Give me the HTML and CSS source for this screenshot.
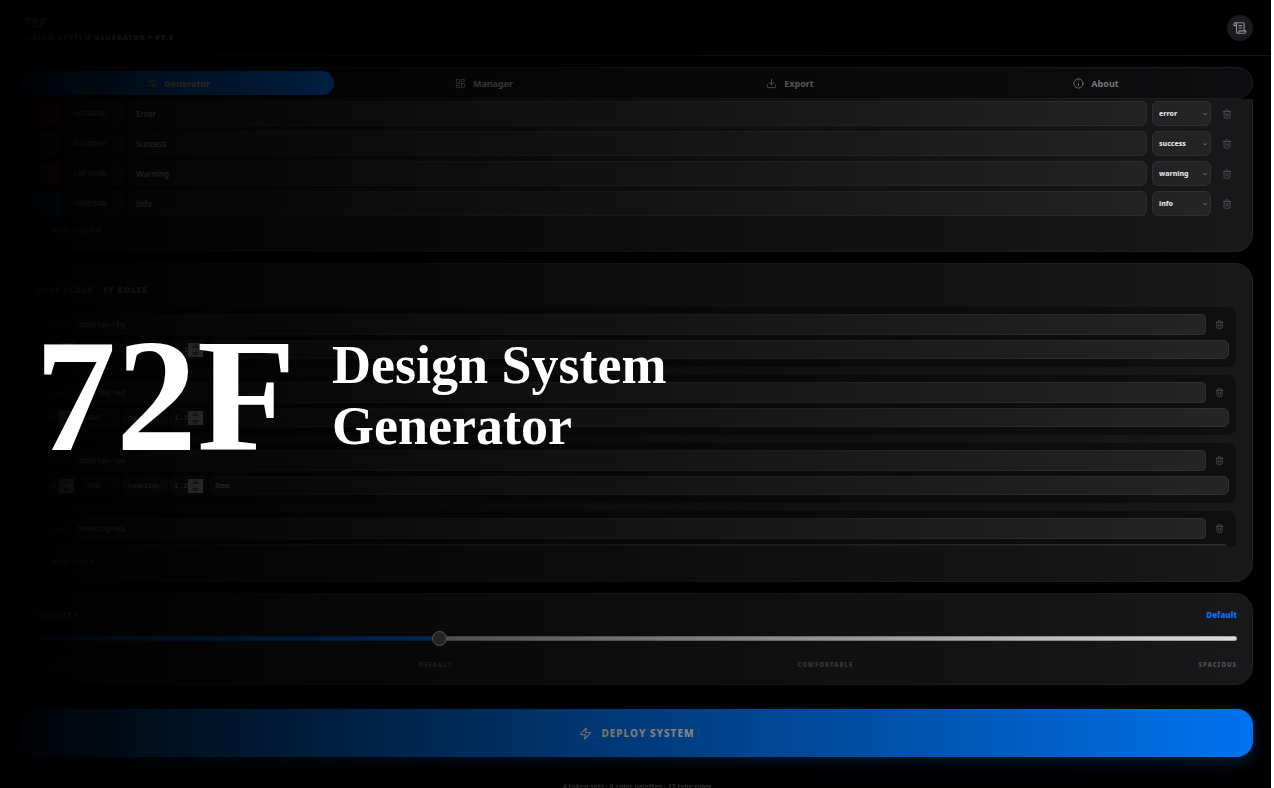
FILE: index.html
```
<!DOCTYPE html>
<html lang="en">
<head>
    <meta charset="UTF-8">
    <meta name="viewport" content="width=device-width, initial-scale=1.0">
    <title>72F Design System Generator</title>
    <link rel="stylesheet" href="styles.css">
</head>
<body>
    <svg width="0" height="0" class="sprite" aria-hidden="true">
        <symbol id="trash" viewBox="0 0 24 24">
            <path d="M3 6h18M19 6v14a2 2 0 0 1-2 2H7a2 2 0 0 1-2-2V6M8 6V4a2 2 0 0 1 2-2h4a2 2 0 0 1 2 2v2M10 11v6M14 11v6"/>
        </symbol>
        <symbol id="plus" viewBox="0 0 24 24"><path d="M5 12h14M12 5v14"/></symbol>
    </svg>

    <div class="app">
        <header class="header">
            <div>
                <h1 class="logo">72F</h1>
                <p class="tagline">Design System Generator • v1.0</p>
            </div>
            <button type="button" class="log-btn" aria-label="Changelog">
                <svg class="icon" viewBox="0 0 24 24"><path d="M15 12h-5M15 8h-5M19 17V5a2 2 0 0 0-2-2H4"/><path d="M8 21h12a2 2 0 0 0 2-2v-1a1 1 0 0 0-1-1H11a1 1 0 0 0-1 1v1a2 2 0 1 1-4 0V5a2 2 0 1 0-4 0v2a1 1 0 0 0 1 1h3"/></svg>
            </button>
        </header>

        <main class="main">
            <nav class="tabs">
                <button type="button" class="tab active">
                    <svg class="icon" viewBox="0 0 24 24"><path d="M20 7h-9M14 17H5"/><circle cx="17" cy="17" r="3"/><circle cx="7" cy="7" r="3"/></svg>
                    Generator
                </button>
                <button type="button" class="tab">
                    <svg class="icon" viewBox="0 0 24 24"><rect x="3" y="3" width="7" height="9" rx="1"/><rect x="14" y="3" width="7" height="5" rx="1"/><rect x="14" y="12" width="7" height="9" rx="1"/><rect x="3" y="16" width="7" height="5" rx="1"/></svg>
                    Manager
                </button>
                <button type="button" class="tab">
                    <svg class="icon" viewBox="0 0 24 24"><path d="M21 15v4a2 2 0 0 1-2 2H5a2 2 0 0 1-2-2v-4M7 10l5 5 5-5M12 15V3"/></svg>
                    Export
                </button>
                <button type="button" class="tab">
                    <svg class="icon" viewBox="0 0 24 24"><circle cx="12" cy="12" r="10"/><path d="M12 16v-4M12 8h.01"/></svg>
                    About
                </button>
            </nav>

            <section class="card colors">
                <div class="color-row">
                    <span class="swatch error"></span>
                    <input class="field hex" type="text" value="#B3261E" aria-label="Error hex">
                    <input class="field name" type="text" value="Error" aria-label="Error name">
                    <select class="field role" aria-label="Error role"><option>error</option></select>
                    <button type="button" class="delete" aria-label="Delete Error"><svg class="icon"><use href="#trash"/></svg></button>
                </div>
                <div class="color-row">
                    <span class="swatch success"></span>
                    <input class="field hex" type="text" value="#1D6D1F" aria-label="Success hex">
                    <input class="field name" type="text" value="Success" aria-label="Success name">
                    <select class="field role" aria-label="Success role"><option>success</option></select>
                    <button type="button" class="delete" aria-label="Delete Success"><svg class="icon"><use href="#trash"/></svg></button>
                </div>
                <div class="color-row">
                    <span class="swatch warning"></span>
                    <input class="field hex" type="text" value="#8F4E00" aria-label="Warning hex">
                    <input class="field name" type="text" value="Warning" aria-label="Warning name">
                    <select class="field role" aria-label="Warning role"><option>warning</option></select>
                    <button type="button" class="delete" aria-label="Delete Warning"><svg class="icon"><use href="#trash"/></svg></button>
                </div>
                <div class="color-row">
                    <span class="swatch info"></span>
                    <input class="field hex" type="text" value="#00639B" aria-label="Info hex">
                    <input class="field name" type="text" value="Info" aria-label="Info name">
                    <select class="field role" aria-label="Info role"><option>info</option></select>
                    <button type="button" class="delete" aria-label="Delete Info"><svg class="icon"><use href="#trash"/></svg></button>
                </div>
                <button type="button" class="add"><svg class="icon"><use href="#plus"/></svg>Add Color</button>
            </section>

            <section class="card types">
                <h2 class="card-title">Type Scale · 17 Roles</h2>
                <div class="type-list">
                    <div class="type-item">
                        <div class="type-row">
                            <span class="prefix">type/</span>
                            <input class="field path" type="text" value="display/lg" aria-label="Role name">
                            <button type="button" class="delete small" aria-label="Delete role"><svg class="icon"><use href="#trash"/></svg></button>
                        </div>
                        <div class="type-props">
                            <input class="field size" type="number" value="57" aria-label="Size">
                            <select class="field weight" aria-label="Weight"><option>400</option></select>
                            <select class="field family" aria-label="Family"><option>heading</option></select>
                            <input class="field leading" type="number" step="0.01" value="1.12" aria-label="Line height">
                            <input class="field tracking" type="text" value="0em" aria-label="Letter spacing">
                        </div>
                    </div>
                    <div class="type-item">
                        <div class="type-row">
                            <span class="prefix">type/</span>
                            <input class="field path" type="text" value="display/md" aria-label="Role name">
                            <button type="button" class="delete small" aria-label="Delete role"><svg class="icon"><use href="#trash"/></svg></button>
                        </div>
                        <div class="type-props">
                            <input class="field size" type="number" value="45" aria-label="Size">
                            <select class="field weight" aria-label="Weight"><option>400</option></select>
                            <select class="field family" aria-label="Family"><option>heading</option></select>
                            <input class="field leading" type="number" step="0.01" value="1.16" aria-label="Line height">
                            <input class="field tracking" type="text" value="0em" aria-label="Letter spacing">
                        </div>
                    </div>
                    <div class="type-item">
                        <div class="type-row">
                            <span class="prefix">type/</span>
                            <input class="field path" type="text" value="display/sm" aria-label="Role name">
                            <button type="button" class="delete small" aria-label="Delete role"><svg class="icon"><use href="#trash"/></svg></button>
                        </div>
                        <div class="type-props">
                            <input class="field size" type="number" value="36" aria-label="Size">
                            <select class="field weight" aria-label="Weight"><option>400</option></select>
                            <select class="field family" aria-label="Family"><option>heading</option></select>
                            <input class="field leading" type="number" step="0.01" value="1.22" aria-label="Line height">
                            <input class="field tracking" type="text" value="0em" aria-label="Letter spacing">
                        </div>
                    </div>
                    <div class="type-item">
                        <div class="type-row">
                            <span class="prefix">type/</span>
                            <input class="field path" type="text" value="heading/h1" aria-label="Role name">
                            <button type="button" class="delete small" aria-label="Delete role"><svg class="icon"><use href="#trash"/></svg></button>
                        </div>
                        <div class="type-props">
                            <input class="field size" type="number" value="32" aria-label="Size">
                            <select class="field weight" aria-label="Weight"><option>400</option></select>
                            <select class="field family" aria-label="Family"><option>heading</option></select>
                            <input class="field leading" type="number" step="0.01" value="1.25" aria-label="Line height">
                            <input class="field tracking" type="text" value="0em" aria-label="Letter spacing">
                        </div>
                    </div>
                </div>
                <button type="button" class="add"><svg class="icon"><use href="#plus"/></svg>Add Role</button>
            </section>

            <section class="card density">
                <div class="density-head">
                    <label class="card-title" for="density">Density</label>
                    <output class="density-value" for="density">Default</output>
                </div>
                <input class="slider" id="density" type="range" min="0" max="3" value="1">
                <div class="density-labels">
                    <span>Compact</span><span>Default</span><span>Comfortable</span><span>Spacious</span>
                </div>
            </section>

            <button type="button" class="deploy">
                <svg class="icon" viewBox="0 0 24 24"><path d="M4 14a1 1 0 0 1-.78-1.63l9.9-10.2a.5.5 0 0 1 .86.46l-1.92 6.02A1 1 0 0 0 13 10h7a1 1 0 0 1 .78 1.63l-9.9 10.2a.5.5 0 0 1-.86-.46l1.92-6.02A1 1 0 0 0 11 14z"/></svg>
                Deploy System
            </button>
            <p class="summary">4 token sets · 8 color palettes · 17 type roles</p>
        </main>

        <div class="cover">
            <div class="cover-logo">72F</div>
            <div class="cover-title">Design System<br>Generator</div>
        </div>
    </div>
</body>
</html>
```
FILE: styles.css
```
* {
    box-sizing: border-box;
}
body {
    margin: 0;
    background: #fff;
    font-family: "Noto Sans", sans-serif;
    overflow: hidden;
}
h1, h2, p {
    margin: 0;
}
button, input, select {
    font-family: inherit;
    margin: 0;
}
button {
    border: none;
    background: none;
    padding: 0;
    cursor: pointer;
}
.sprite {
    position: absolute;
}
.icon {
    fill: none;
    stroke: currentColor;
    stroke-width: 2;
    stroke-linecap: round;
    stroke-linejoin: round;
    flex: none;
}
.app {
    position: relative;
    height: 100vh;
    margin-right: 3px;
    background: #000;
    color: #fff;
    overflow: hidden;
}

/* header */
.header {
    display: flex;
    justify-content: space-between;
    align-items: center;
    height: 56px;
    padding: 0 18px 0 22px;
    border-bottom: 1px solid #161618;
}
.logo {
    font-size: 14px;
    line-height: 20px;
    font-weight: 900;
    font-style: italic;
}
.tagline {
    font-size: 7px;
    line-height: 10px;
    font-weight: 900;
    letter-spacing: 1px;
    text-transform: uppercase;
    color: #aeaeb2;
}
.log-btn {
    display: grid;
    place-items: center;
    width: 26px;
    height: 26px;
    border-radius: 50%;
    background: #1c1c1e;
    color: #98989d;
}
.log-btn .icon {
    width: 14px;
    height: 14px;
}

/* tabs */
.main {
    padding: 11px 18px 0 21px;
}
.tabs {
    display: flex;
    height: 32px;
    padding: 3px;
    border: 1px solid #202022;
    border-radius: 16px;
    background: #0e0e10;
}
.tab {
    flex: 1;
    display: flex;
    justify-content: center;
    align-items: center;
    gap: 7px;
    color: #8e8e93;
    font-size: 9px;
    font-weight: 700;
}
.tab .icon {
    width: 11px;
    height: 11px;
}
.tab.active {
    position: relative;
    isolation: isolate;
    color: #fff;
}
/* the pill runs a little past its tab */
.tab.active::before {
    content: "";
    position: absolute;
    inset: 0 -3px;
    z-index: -1;
    border-radius: 12px;
    background: #007aff;
}

/* cards */
.card {
    padding: 0 15px;
    border: 1px solid #242426;
    border-radius: 18px;
    background: #1a1a1c;
}
.card-title {
    font-size: 8px;
    line-height: 12px;
    font-weight: 900;
    letter-spacing: 1px;
    text-transform: uppercase;
    color: #aeaeb2;
}
.field {
    min-width: 0;
    padding: 0 6px;
    border: 1px solid #353537;
    border-radius: 6px;
    outline: none;
    background: #28282a;
    color: #fff;
}
select.field {
    appearance: none;
    background: #28282a url("data:image/svg+xml,%3Csvg xmlns='http://www.w3.org/2000/svg' viewBox='0 0 24 24' fill='none' stroke='%238e8e93' stroke-width='3'%3E%3Cpath d='M5 9l7 7 7-7'/%3E%3C/svg%3E") no-repeat right 2px center / 6px 6px;
}
.delete {
    display: grid;
    place-items: center;
    width: 21px;
    color: #5c5c62;
}
.delete .icon {
    width: 10px;
    height: 10px;
}
.add {
    display: flex;
    align-items: center;
    gap: 6px;
    padding-left: 1px;
    color: #8e8e93;
    font-size: 7px;
    line-height: 12px;
    font-weight: 800;
    letter-spacing: 1px;
    text-transform: uppercase;
}
.add .icon {
    width: 8px;
    height: 8px;
}

/* colors, scrolled under the tabs */
.colors {
    padding-top: 2px;
    padding-bottom: 14px;
    border-top: none;
    border-radius: 0 0 18px 18px;
}
.color-row {
    display: flex;
    align-items: center;
    gap: 5px;
    height: 25px;
    margin-bottom: 5px;
}
.color-row .field {
    height: 25px;
}
.swatch {
    width: 21px;
    height: 21px;
    margin: 0 2px 0 1px;
}
.swatch.error { background: #b3261e; }
.swatch.success { background: #1d6d1f; }
.swatch.warning { background: #8f4e00; }
.swatch.info { background: #00639b; }
.hex {
    width: 58px;
    font-family: "Liberation Mono", monospace;
    font-size: 8px;
}
.name {
    flex: 1;
    font-size: 8px;
    font-weight: 600;
}
.role {
    width: 59px;
    font-size: 7px;
    font-weight: 800;
}
.colors .add {
    margin-top: 9px;
}

/* type scale */
.types {
    margin-top: 11px;
    padding-top: 20px;
    padding-bottom: 13px;
}
.type-list {
    height: 239px;
    margin: 11px 0 10px;
    padding: 0 1px;
    overflow: hidden;
}
.type-item {
    height: 60px;
    margin-bottom: 8px;
    padding: 7px;
    border-radius: 8px;
    background: #101012;
}
.type-row, .type-props {
    display: flex;
    font-family: "Liberation Mono", monospace;
}
.type-row {
    height: 21px;
    margin-bottom: 5px;
    align-items: center;
}
.prefix {
    width: 25px;
    font-size: 7px;
    color: #8e8e93;
}
.path {
    flex: 1;
    height: 21px;
    border-radius: 4px;
    font-family: inherit;
    font-size: 8px;
}
.delete.small {
    width: 19px;
    margin-left: 4px;
}
.delete.small .icon {
    width: 9px;
    height: 9px;
}
.type-props {
    gap: 2px;
}
.type-props .field {
    height: 19px;
    padding: 0 3px;
    font-family: inherit;
    font-size: 8px;
}
.type-props .size { width: 33px; }
.type-props .weight { width: 40px; }
.type-props .family { width: 46px; }
.type-props .weight, .type-props .family { padding-left: 5px; padding-right: 8px; }
.type-props .leading { width: 37px; }
.type-props .tracking { flex: 1; padding-left: 5px; }
input[type="number"]::-webkit-inner-spin-button {
    height: 14px;
    opacity: 1;
}

/* density */
.density {
    margin-top: 11px;
    padding-top: 15px;
    padding-bottom: 13px;
}
.density-head, .density-labels {
    display: flex;
    justify-content: space-between;
}
.density-value {
    font-size: 8px;
    line-height: 12px;
    font-weight: 900;
    color: #007aff;
}
.slider {
    display: block;
    appearance: none;
    width: 100%;
    height: 5px;
    margin: 15px 0 18px;
    border-radius: 3px;
    background: linear-gradient(to right, #007aff 33%, #efefef 33%);
    box-shadow: inset 0 0 0 1px rgba(0, 0, 0, 0.25);
}
.slider::-webkit-slider-thumb {
    appearance: none;
    width: 15px;
    height: 15px;
    border: 1px solid #fff;
    border-radius: 50%;
    background: #6c6c74;
}
.density-labels {
    font-size: 6px;
    line-height: 12px;
    font-weight: 900;
    letter-spacing: 1px;
    text-transform: uppercase;
    color: #55555a;
}

.deploy {
    display: flex;
    justify-content: center;
    align-items: center;
    gap: 9px;
    width: 100%;
    height: 48px;
    margin-top: 24px;
    border-radius: 16px;
    background: #007aff;
    box-shadow: 0 4px 14px rgba(0, 122, 255, 0.3);
    color: #fff;
    font-size: 10px;
    font-weight: 800;
    letter-spacing: 1px;
    text-transform: uppercase;
}
.deploy .icon {
    width: 13px;
    height: 13px;
}
.summary {
    margin-top: 24px;
    text-align: center;
    font-size: 7px;
    line-height: 12px;
    font-weight: 600;
    color: #636366;
}

/* title over the faded app */
.cover {
    position: absolute;
    inset: 0;
    display: flex;
    align-items: center;
    gap: 36px;
    padding: 3px 0 0 35px;
    background: linear-gradient(to right, #000, rgba(0, 0, 0, 0.05));
    font-family: "Liberation Serif", serif;
    font-weight: 700;
}
.cover-logo {
    font-size: 162px;
    line-height: 162px;
}
.cover-title {
    font-size: 54px;
    line-height: 61px;
}
```
